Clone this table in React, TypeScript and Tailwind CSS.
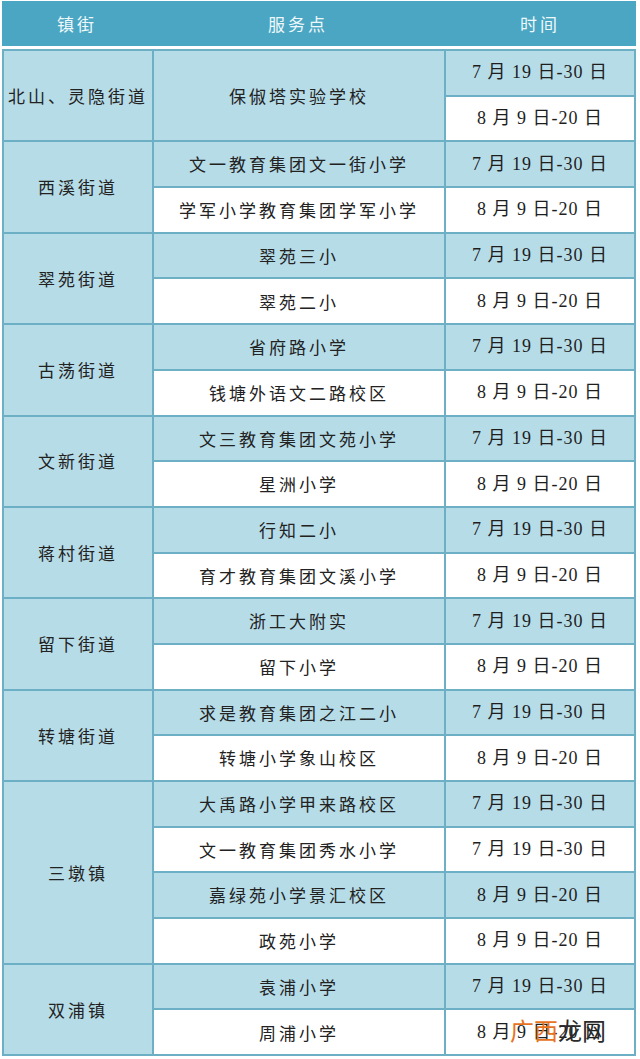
const groups = [
  { town: "北山、灵隐街道", rows: [["保俶塔实验学校", "7 月 19 日-30 日"], ["", "8 月 9 日-20 日"]], merged: true },
  { town: "西溪街道", rows: [["文一教育集团文一街小学", "7 月 19 日-30 日"], ["学军小学教育集团学军小学", "8 月 9 日-20 日"]] },
  { town: "翠苑街道", rows: [["翠苑三小", "7 月 19 日-30 日"], ["翠苑二小", "8 月 9 日-20 日"]] },
  { town: "古荡街道", rows: [["省府路小学", "7 月 19 日-30 日"], ["钱塘外语文二路校区", "8 月 9 日-20 日"]] },
  { town: "文新街道", rows: [["文三教育集团文苑小学", "7 月 19 日-30 日"], ["星洲小学", "8 月 9 日-20 日"]] },
  { town: "蒋村街道", rows: [["行知二小", "7 月 19 日-30 日"], ["育才教育集团文溪小学", "8 月 9 日-20 日"]] },
  { town: "留下街道", rows: [["浙工大附实", "7 月 19 日-30 日"], ["留下小学", "8 月 9 日-20 日"]] },
  { town: "转塘街道", rows: [["求是教育集团之江二小", "7 月 19 日-30 日"], ["转塘小学象山校区", "8 月 9 日-20 日"]] },
  {
    town: "三墩镇",
    rows: [
      ["大禹路小学甲来路校区", "7 月 19 日-30 日"],
      ["文一教育集团秀水小学", "7 月 19 日-30 日"],
      ["嘉绿苑小学景汇校区", "8 月 9 日-20 日"],
      ["政苑小学", "8 月 9 日-20 日"],
    ],
  },
  { town: "双浦镇", rows: [["袁浦小学", "7 月 19 日-30 日"], ["周浦小学", "8 月 9 日-20 日"]] },
];

const cjk = "font-['Noto_Sans_CJK_SC',sans-serif]";
const dateFont = "font-['Liberation_Serif','Noto_Sans_CJK_SC',serif]";

export default function App() {
  const cells: React.ReactNode[] = [];
  let row = 1;
  groups.forEach((g) => {
    const span = g.rows.length;
    cells.push(
      <div
        key={`t${row}`}
        className={`flex items-center justify-center bg-[#b6dce8] text-[17px] tracking-[3px] text-[#222] ${cjk}`}
        style={{ gridColumn: 1, gridRow: `${row} / span ${span}` }}
      >
        {g.town}
      </div>
    );
    g.rows.forEach((r, i) => {
      const bg = i % 2 === 0 ? "bg-[#b6dce8]" : "bg-white";
      if (g.merged) {
        if (i === 0) {
          cells.push(
            <div
              key={`s${row}`}
              className={`flex items-center justify-center bg-[#b6dce8] text-[17px] tracking-[3px] text-[#222] ${cjk}`}
              style={{ gridColumn: 2, gridRow: `${row} / span ${span}` }}
            >
              {r[0]}
            </div>
          );
        }
      } else {
        cells.push(
          <div
            key={`s${row + i}`}
            className={`flex items-center justify-center ${bg} text-[17px] tracking-[3px] text-[#222] ${cjk}`}
            style={{ gridColumn: 2, gridRow: row + i }}
          >
            {r[0]}
          </div>
        );
      }
      cells.push(
        <div
          key={`d${row + i}`}
          className={`flex items-center justify-center ${bg} text-[18px] tracking-[1px] whitespace-pre text-[#1e1e1e] ${dateFont}`}
          style={{ gridColumn: 3, gridRow: row + i }}
        >
          {r[1]}
        </div>
      );
    });
    row += span;
  });

  return (
    <div className="relative w-[640px] h-[1059px] bg-white overflow-hidden">
      <div className="ml-[2px] mt-[1px] w-[634px] h-[45px] bg-[#4aa6c2] grid grid-cols-[150px_292px_192px] text-[#eef8fb] text-[17px] tracking-[3px]">
        <div className={`flex items-center justify-center ${cjk}`}>镇街</div>
        <div className={`flex items-center justify-center ${cjk}`}>服务点</div>
        <div className={`flex items-center justify-center ${cjk}`}>时间</div>
      </div>
      <div className="ml-[2px] mt-[3px] w-[634px] grid grid-cols-[148px_290px_188px] auto-rows-[43.7px] gap-[2px] p-[2px] bg-[#6db0c6]">
        {cells}
      </div>
      <div className={`absolute left-[510px] top-[1018px] text-[24px] leading-none ${cjk}`}>
        <span className="text-[#e8731f]">广西</span>
        <span className="text-[#2a2a2a]">龙网</span>
      </div>
    </div>
  );
}
